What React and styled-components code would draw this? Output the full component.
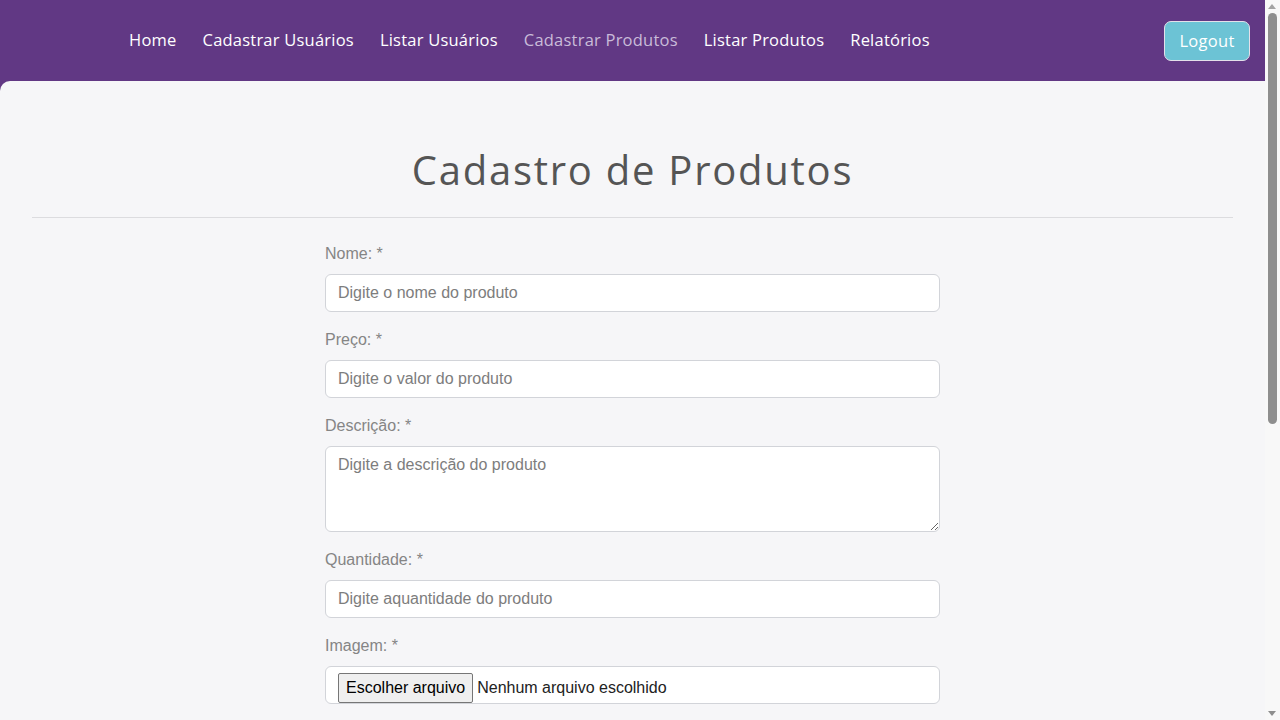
import React from "react";
import styled, { createGlobalStyle } from "styled-components";

const Global = createGlobalStyle`
  html { margin: 0; padding: 0; background: #f8f8f8; }
  body {
    margin: 0 15px 0 0;
    padding: 0;
    background: #613884;
    font-family: "Liberation Sans", Arial, sans-serif;
  }
  * { box-sizing: border-box; }
`;

const NavBar = styled.header`
  height: 81px;
  background: #613884;
  display: flex;
  align-items: center;
  padding: 0 15px 0 116px;
`;

const NavList = styled.nav`
  display: flex;
  align-items: center;
  flex: 1;
  margin-top: -1px;
`;

const NavLink = styled.a`
  font-family: "Open Sans", "Noto Sans", sans-serif;
  font-size: 16.5px;
  letter-spacing: 0.22px;
  color: ${(p) => (p.$active ? "#c9bcd9" : "#ffffff")};
  text-decoration: none;
  padding: 0 13px;
  line-height: 24px;
  cursor: pointer;
`;

const LogoutButton = styled.button`
  font-family: "Open Sans", "Noto Sans", sans-serif;
  font-size: 16.5px;
  letter-spacing: 0.3px;
  color: #ffffff;
  background: #6cc3d5;
  border: 1px solid #e4e0ea;
  border-radius: 7px;
  width: 86px;
  height: 40px;
  margin-top: 1px;
  padding: 0 0 2px;
  cursor: pointer;
`;

const Main = styled.main`
  background: #f6f6f8;
  border-top-left-radius: 10px;
  padding: 59px 0 480px;
`;

const Title = styled.h1`
  font-family: "Open Sans", "Noto Sans", sans-serif;
  font-weight: 400;
  font-size: 40px;
  letter-spacing: 1.75px;
  color: #555555;
  text-align: center;
  margin: 0;
  line-height: 60px;
`;

const Divider = styled.hr`
  border: 0;
  border-top: 1px solid #dcdcdf;
  margin: 17px 32px 24px;
`;

const Form = styled.form`
  width: 615px;
  margin: 0 auto;
  display: flex;
  flex-direction: column;
`;

const Group = styled.div`
  display: flex;
  flex-direction: column;
  margin-bottom: 16px;
`;

const Label = styled.label`
  font-size: 16px;
  line-height: 24px;
  color: #858585;
  margin-bottom: 8px;
`;

const fieldBase = `
  width: 100%;
  font-family: "Liberation Sans", Arial, sans-serif;
  font-size: 16px;
  color: #495057;
  background: #ffffff;
  border: 1px solid #d2d4d9;
  border-radius: 6px;
  outline: none;
  &::placeholder { color: #7d7d7d; }
`;

const Input = styled.input`
  ${fieldBase}
  height: 38px;
  padding: 0 12px;
`;

const TextArea = styled.textarea`
  ${fieldBase}
  height: 86px;
  padding: 9px 12px;
  resize: vertical;
  display: block;
`;

const FileBox = styled.div`
  ${fieldBase}
  height: 38px;
  padding: 0 12px;
  display: flex;
  align-items: center;
  gap: 4px;
`;

const FileButton = styled.span`
  font-family: "Liberation Sans", Arial, sans-serif;
  font-size: 16px;
  color: #000000;
  background: #efefef;
  border: 1px solid #767676;
  border-radius: 2px;
  height: 30px;
  padding: 0 7px;
  display: inline-flex;
  align-items: center;
  margin-top: 6px;
`;

const FileText = styled.span`
  font-size: 16px;
  color: #222222;
  margin-top: 6px;
`;

const Submit = styled.button`
  align-self: flex-start;
  margin-top: 10px;
  font-family: "Open Sans", "Noto Sans", sans-serif;
  font-size: 16px;
  color: #ffffff;
  background: #613884;
  border: 0;
  border-radius: 6px;
  padding: 9px 20px;
`;

const ScrollTrack = styled.div`
  position: fixed;
  top: 0;
  right: 0;
  width: 15px;
  height: 100vh;
  background: #f8f8f8;
  z-index: 10;
`;

const ScrollThumb = styled.div`
  position: absolute;
  top: 13px;
  left: 3px;
  width: 9px;
  height: 411px;
  border-radius: 5px;
  background: #8e8e8e;
`;

const Arrow = styled.div`
  position: absolute;
  left: 3px;
  width: 0;
  height: 0;
  border-left: 4.5px solid transparent;
  border-right: 4.5px solid transparent;
  ${(p) =>
    p.$down
      ? "bottom: 4px; border-top: 5px solid #8e8e8e;"
      : "top: 4px; border-bottom: 5px solid #a3a3a3;"}
`;

const links = [
  "Home",
  "Cadastrar Usuários",
  "Listar Usuários",
  "Cadastrar Produtos",
  "Listar Produtos",
  "Relatórios",
];

export default function App() {
  return (
    <>
      <Global />
      <NavBar>
        <NavList>
          {links.map((l) => (
            <NavLink key={l} $active={l === "Cadastrar Produtos"}>
              {l}
            </NavLink>
          ))}
        </NavList>
        <LogoutButton>Logout</LogoutButton>
      </NavBar>
      <Main>
        <Title>Cadastro de Produtos</Title>
        <Divider />
        <Form onSubmit={(e) => e.preventDefault()}>
          <Group>
            <Label>Nome: *</Label>
            <Input placeholder="Digite o nome do produto" />
          </Group>
          <Group>
            <Label>Preço: *</Label>
            <Input placeholder="Digite o valor do produto" />
          </Group>
          <Group>
            <Label>Descrição: *</Label>
            <TextArea placeholder="Digite a descrição do produto" />
          </Group>
          <Group>
            <Label>Quantidade: *</Label>
            <Input placeholder="Digite aquantidade do produto" />
          </Group>
          <Group>
            <Label>Imagem: *</Label>
            <FileBox>
              <FileButton>Escolher arquivo</FileButton>
              <FileText>Nenhum arquivo escolhido</FileText>
            </FileBox>
          </Group>
          <Submit type="submit">Cadastrar</Submit>
        </Form>
      </Main>
      <ScrollTrack aria-hidden="true">
        <Arrow />
        <ScrollThumb />
        <Arrow $down />
      </ScrollTrack>
    </>
  );
}
